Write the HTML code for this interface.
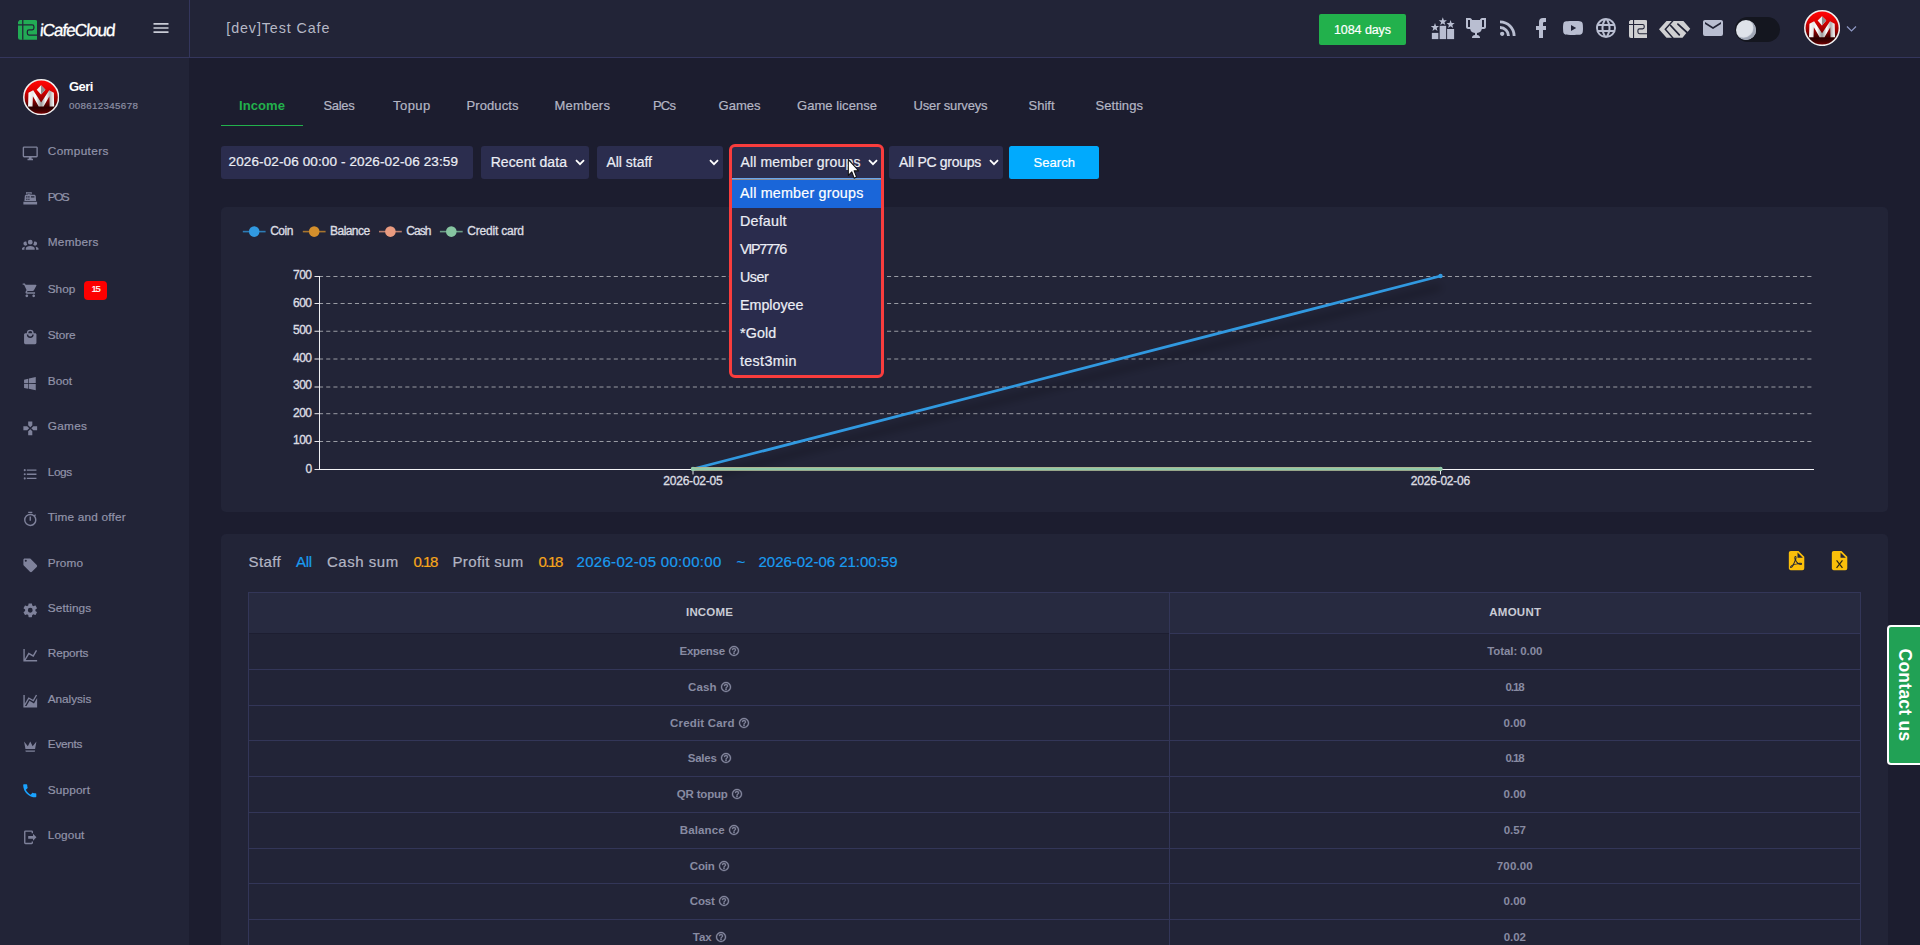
<!DOCTYPE html>
<html lang="en">
<head>
<meta charset="utf-8">
<title>iCafeCloud - Income report</title>
<style>
*{box-sizing:border-box;margin:0;padding:0}
html,body{width:1920px;height:945px;overflow:hidden}
body{background:#1c1d2f;font-family:"Liberation Sans",sans-serif;color:#d2d4de;font-size:13px;position:relative}
.abs{position:absolute}
.tx{position:absolute;white-space:nowrap}
.box{position:absolute}
#header{position:absolute;left:0;top:0;width:1920px;height:58px;background:#222437;border-bottom:1px solid #34365c}
#logo-wrap{position:absolute;left:0;top:0;width:190px;height:58px;border-right:1px solid #34365c}
#sidebar{position:absolute;left:0;top:58px;width:189px;height:887px;background:#222437}
.fld{position:absolute;top:146px;height:33px;background:#2b2d4e;border-radius:3px}
.card{position:absolute;background:#222437;border-radius:5px}
.hl{position:absolute;height:1px;background:#333658}
.vl{position:absolute;width:1px;background:#333658}
</style>
</head>
<body>

<header>
<div id="header"><div id="logo-wrap"></div></div>
<svg class="abs" style="left:17.9px;top:20.1px" width="19.4" height="19.7" viewBox="0 0 19.4 19.7">
<path d="M1.68,0.00H17.09Q19.40,0.00 19.40,2.42V19.7H2.10Q0.00,19.70 0.00,17.50V1.76Z" fill="#22ab55"/>
<g fill="none" stroke="#222437" stroke-width="1.25">
<path d="M4.77,0.00V19.7"/>
<path d="M0.00,4.95H14.26Q15.94,4.95 15.94,6.71V8.03Q15.94,9.79 14.26,9.79H11.01Q9.33,9.79 9.33,11.56V13.32Q9.33,15.08 11.01,15.08H19.4"/>
</g></svg>
<span id="t1" class="tx " style="left:38.60px;top:19.00px;font-size:17.2px;line-height:22px;color:#ffffff;letter-spacing:-1.048px;transform:skewX(-5deg);transform-origin:0 100%;-webkit-text-stroke:0.3px #fff;">iCafeCloud</span>
<svg class="abs" style="left:151.3px;top:17.6px" width="20" height="20" viewBox="0 0 24 24" ><path fill="#c9cbd6" d="M3,6H21V8H3V6M3,11H21V13H3V11M3,16H21V18H3V16Z"/></svg>
<span id="t2" class="tx " style="left:226.30px;top:17.50px;font-size:14.3px;line-height:21px;color:#b6b8c6;letter-spacing:0.897px;-webkit-text-stroke:0;">[dev]Test Cafe</span>
<div class="box" style="left:1319px;top:14px;width:87px;height:31px;background:#22b14c;border-radius:2px"></div>
<span id="t3" class="tx " style="left:1334.00px;top:20.80px;font-size:12.5px;line-height:19px;color:#ffffff;letter-spacing:-0.081px;-webkit-text-stroke:0.2px;">1084 days</span>
<svg class="abs" style="left:1431px;top:17px" width="24" height="23" viewBox="0 0 24 23">
<g fill="#b9bed1">
<rect x="0.85" y="15.9" width="6.5" height="6.2"/><rect x="8.65" y="8.8" width="6.5" height="13.3"/><rect x="16.1" y="12" width="7" height="10.1"/>
<path d="M4.00,6.10L5.06,8.94L8.09,9.07L5.71,10.96L6.53,13.88L4.00,12.20L1.47,13.88L2.29,10.96L-0.09,9.07L2.94,8.94Z"/><path d="M11.80,0.30L12.86,3.14L15.89,3.27L13.51,5.16L14.33,8.08L11.80,6.40L9.27,8.08L10.09,5.16L7.71,3.27L10.74,3.14Z"/><path d="M19.60,3.10L20.66,5.94L23.69,6.07L21.31,7.96L22.13,10.88L19.60,9.20L17.07,10.88L17.89,7.96L15.51,6.07L18.54,5.94Z"/>
</g></svg>
<svg class="abs" style="left:1463.5px;top:16.1px" width="24" height="24" viewBox="0 0 24 24" ><path fill="#b9bed1" d="M20.2,2H19.5H18C17.1,2 16,3 16,4H8C8,3 6.9,2 6,2H4.5H3.8H2V11C2,12 3,13 4,13H6.2C6.6,15 7.9,16.7 11,17V19.1C8.8,19.3 8,20.4 8,21.7V22H16V21.7C16,20.4 15.2,19.3 13,19.1V17C16.1,16.7 17.4,15 17.8,13H20C21,13 22,12 22,11V2H20.2M4,11V4H6V6V11C5.1,11 4.3,11 4,11M20,11C19.7,11 18.9,11 18,11V6V4H20V11Z"/></svg>
<svg class="abs" style="left:1496px;top:16.1px" width="24" height="24" viewBox="0 0 24 24" ><path fill="#b9bed1" d="M6.18,15.64A2.18,2.18 0 0,1 8.36,17.82C8.36,19 7.38,20 6.18,20C5,20 4,19 4,17.82A2.18,2.18 0 0,1 6.18,15.64M4,4.44A15.56,15.56 0 0,1 19.56,20H16.73A12.73,12.73 0 0,0 4,7.27V4.44M4,10.1A9.9,9.9 0 0,1 13.9,20H11.07A7.07,7.07 0 0,0 4,12.93V10.1Z"/></svg>
<svg class="abs" style="left:1528.5px;top:16.1px" width="24" height="24" viewBox="0 0 24 24" ><path fill="#b9bed1" d="M17,2V2H17V6H15C14.31,6 14,6.81 14,7.5V10H14L17,10V14H14V22H10V14H7V10H10V6A4,4 0 0,1 14,2H17Z"/></svg>
<svg class="abs" style="left:1561px;top:16.1px" width="24" height="24" viewBox="0 0 24 24" ><path fill="#b9bed1" d="M10,15L15.19,12L10,9V15M21.56,7.17C21.69,7.64 21.78,8.27 21.84,9.07C21.91,9.87 21.94,10.56 21.94,11.16L22,12C22,14.19 21.84,15.8 21.56,16.83C21.31,17.73 20.73,18.31 19.83,18.56C19.36,18.69 18.5,18.78 17.18,18.84C15.88,18.91 14.69,18.94 13.59,18.94L12,19C7.81,19 5.2,18.84 4.17,18.56C3.27,18.31 2.69,17.73 2.44,16.83C2.31,16.36 2.22,15.73 2.16,14.93C2.09,14.13 2.06,13.44 2.06,12.84L2,12C2,9.81 2.16,8.2 2.44,7.17C2.69,6.27 3.27,5.69 4.17,5.44C4.64,5.31 5.5,5.22 6.82,5.16C8.12,5.09 9.31,5.06 10.41,5.06L12,5C16.19,5 18.8,5.16 19.83,5.44C20.73,5.69 21.31,6.27 21.56,7.17Z"/></svg>
<svg class="abs" style="left:1594px;top:16.1px" width="24" height="24" viewBox="0 0 24 24" ><path fill="#b9bed1" d="M16.36,14C16.44,13.34 16.5,12.68 16.5,12C16.5,11.32 16.44,10.66 16.36,10H19.74C19.9,10.64 20,11.31 20,12C20,12.69 19.9,13.36 19.74,14M14.59,19.56C15.19,18.45 15.65,17.25 15.97,16H18.92C17.96,17.65 16.43,18.93 14.59,19.56M14.34,14H9.66C9.56,13.34 9.5,12.68 9.5,12C9.5,11.32 9.56,10.65 9.66,10H14.34C14.43,10.65 14.5,11.32 14.5,12C14.5,12.68 14.43,13.34 14.34,14M12,19.96C11.17,18.76 10.5,17.43 10.09,16H13.91C13.5,17.43 12.83,18.76 12,19.96M8,8H5.08C6.03,6.34 7.57,5.06 9.4,4.44C8.8,5.55 8.35,6.75 8,8M5.08,16H8C8.35,17.25 8.8,18.45 9.4,19.56C7.57,18.93 6.03,17.65 5.08,16M4.26,14C4.1,13.36 4,12.69 4,12C4,11.31 4.1,10.64 4.26,10H7.64C7.56,10.66 7.5,11.32 7.5,12C7.5,12.68 7.56,13.34 7.64,14M12,4.03C12.83,5.23 13.5,6.57 13.91,8H10.09C10.5,6.57 11.17,5.23 12,4.03M18.92,8H15.97C15.65,6.75 15.19,5.55 14.59,4.44C16.43,5.07 17.96,6.34 18.92,8M12,2C6.47,2 2,6.5 2,12A10,10 0 0,0 12,22A10,10 0 0,0 22,12A10,10 0 0,0 12,2Z"/></svg>
<svg class="abs" style="left:1628.7px;top:19.7px" width="18.5" height="17.9" viewBox="0 0 18.5 17.9">
<path d="M1.60,0.00H16.30Q18.50,0.00 18.50,2.20V17.9H2.00Q0.00,17.90 0.00,15.90V1.60Z" fill="#d0d0d2"/>
<g fill="none" stroke="#222437" stroke-width="1.1">
<path d="M4.55,0.00V17.9"/>
<path d="M0.00,4.50H13.60Q15.20,4.50 15.20,6.10V7.30Q15.20,8.90 13.60,8.90H10.50Q8.90,8.90 8.90,10.50V12.10Q8.90,13.70 10.50,13.70H18.5"/>
</g></svg>
<svg class="abs" style="left:1659.3px;top:21px" width="32" height="17" viewBox="0 0 32 17">
<path d="M0,8.33L7.5,0H24.4L31.25,7.7L28.1,11.4L27,12.6L23.5,16.8H7.5Z" fill="#d0d0d2"/>
<g fill="none" stroke="#222437" stroke-width="1.7">
<path d="M14.1,-0.4L6.3,8.33L14.1,17.2" stroke-width="1.45"/>
<path d="M11.6,4.5L20.3,13.9" stroke-linecap="round"/>
<path d="M18.9,3.1L28.6,12" stroke-linecap="round"/>
</g></svg>
<svg class="abs" style="left:1700.5px;top:16.1px" width="24" height="24" viewBox="0 0 24 24" ><path fill="#b9bed1" d="M20,8L12,13L4,8V6L12,11L20,6M20,4H4C2.89,4 2,4.89 2,6V18A2,2 0 0,0 4,20H20A2,2 0 0,0 22,18V6C22,4.89 21.1,4 20,4Z"/></svg>
<div class="box" style="left:1735px;top:17px;width:45px;height:25px;border-radius:13px;background:#14161f"></div>
<div class="box" style="left:1736px;top:20px;width:20px;height:20px;border-radius:10px;background:#dfe3ea;box-shadow:inset -2.6px -2.2px 0.8px 0 #a0a7b6"></div>
<svg class="abs" style="left:1803.9px;top:9.899999999999999px" width="36.2" height="36.2" viewBox="0 0 40 40">
<defs><linearGradient id="aga" x1="0" y1="0" x2="0" y2="1"><stop offset="0.05" stop-color="#ff0505"/><stop offset="0.3" stop-color="#e00000"/><stop offset="0.6" stop-color="#8c0000"/><stop offset="0.8" stop-color="#2c0000"/><stop offset="0.9" stop-color="#4a0000"/><stop offset="1" stop-color="#8a0000"/></linearGradient>
<linearGradient id="ama" x1="0" y1="0" x2="1" y2="0"><stop offset="0" stop-color="#ffffff"/><stop offset="0.16" stop-color="#e8e8e8"/><stop offset="0.3" stop-color="#ffffff"/><stop offset="0.5" stop-color="#9a9a9a"/><stop offset="0.68" stop-color="#ffffff"/><stop offset="0.84" stop-color="#b0b0b0"/><stop offset="1" stop-color="#ffffff"/></linearGradient></defs>
<circle cx="20" cy="20" r="19.1" fill="url(#aga)" stroke="#f0f0f0" stroke-width="1.7"/>
<path d="M5.6,30.1L6,15.1L11.2,12.4L19.95,25.7L28.8,12.4L33.9,15.1L34.25,30.1H29.3L29.05,19L22.6,30.1H17.3L10.9,19L10.45,30.1Z" fill="url(#ama)"/>
<path d="M19.8,7L24.6,11.7L19.8,17L15.1,11.7Z" fill="#f4f4f4"/><path d="M19.8,7L24.6,11.7L19.8,17Z" fill="#8e8e8e"/>
</svg>
<svg class="abs" style="left:1846px;top:24.5px" width="11" height="8" viewBox="0 0 11 8"><path d="M1,1.5L5.5,6L10,1.5" fill="none" stroke="#8e98c4" stroke-width="1.2"/></svg>
</header>
<nav>
<div id="sidebar"></div>
<svg class="abs" style="left:22.849999999999998px;top:78.7px" width="36.4" height="36.4" viewBox="0 0 40 40">
<defs><linearGradient id="agb" x1="0" y1="0" x2="0" y2="1"><stop offset="0.05" stop-color="#ff0505"/><stop offset="0.3" stop-color="#e00000"/><stop offset="0.6" stop-color="#8c0000"/><stop offset="0.8" stop-color="#2c0000"/><stop offset="0.9" stop-color="#4a0000"/><stop offset="1" stop-color="#8a0000"/></linearGradient>
<linearGradient id="amb" x1="0" y1="0" x2="1" y2="0"><stop offset="0" stop-color="#ffffff"/><stop offset="0.16" stop-color="#e8e8e8"/><stop offset="0.3" stop-color="#ffffff"/><stop offset="0.5" stop-color="#9a9a9a"/><stop offset="0.68" stop-color="#ffffff"/><stop offset="0.84" stop-color="#b0b0b0"/><stop offset="1" stop-color="#ffffff"/></linearGradient></defs>
<circle cx="20" cy="20" r="19.1" fill="url(#agb)" stroke="#f0f0f0" stroke-width="1.7"/>
<path d="M5.6,30.1L6,15.1L11.2,12.4L19.95,25.7L28.8,12.4L33.9,15.1L34.25,30.1H29.3L29.05,19L22.6,30.1H17.3L10.9,19L10.45,30.1Z" fill="url(#amb)"/>
<path d="M19.8,7L24.6,11.7L19.8,17L15.1,11.7Z" fill="#f4f4f4"/><path d="M19.8,7L24.6,11.7L19.8,17Z" fill="#8e8e8e"/>
</svg>
<span id="t4" class="tx " style="left:69.00px;top:77.00px;font-size:13px;line-height:20px;color:#ffffff;font-weight:700;letter-spacing:-0.576px;">Geri</span>
<span id="t5" class="tx " style="left:69.00px;top:98.00px;font-size:9.8px;line-height:15px;color:#8d8fa4;letter-spacing:0.314px;-webkit-text-stroke:0.2px;">008612345678</span>
<svg class="abs" style="left:22.2px;top:144.6px" width="16.5" height="16.5" viewBox="0 0 24 24" ><path fill="#7f829b" d="M21,16H3V4H21M21,2H3C1.89,2 1,2.89 1,4V16A2,2 0 0,0 3,18H10V20H8V22H16V20H14V18H21A2,2 0 0,0 23,16V4C23,2.89 22.1,2 21,2Z"/></svg>
<span id="t6" class="tx " style="left:47.80px;top:142.30px;font-size:11.8px;line-height:18px;color:#9294aa;letter-spacing:0.353px;-webkit-text-stroke:0.2px;">Computers</span>
<svg class="abs" style="left:22.2px;top:190.4px" width="16.5" height="16.5" viewBox="0 0 24 24" ><path fill="#7f829b" d="M2,17H22V21H2V17M6.25,7H9V6H6V3H14V6H11V7H17.8C18.8,7 19.8,8 20,9L20.5,16H3.5L4.05,9C4.05,8 5.05,7 6.25,7M13,9V11H18V9H13M6,9V10H8V9H6M9,9V10H11V9H9M6,11V12H8V11H6M9,11V12H11V11H9M6,13V14H8V13H6M9,13V14H11V13H9M7,4V5H13V4H7Z"/></svg>
<span id="t7" class="tx " style="left:47.80px;top:188.10px;font-size:11.8px;line-height:18px;color:#9294aa;letter-spacing:-1.500px;-webkit-text-stroke:0.2px;">POS</span>
<svg class="abs" style="left:22.2px;top:235.79999999999998px" width="16.5" height="16.5" viewBox="0 0 24 24" ><path fill="#7f829b" d="M12,5.5A3.5,3.5 0 0,1 15.5,9A3.5,3.5 0 0,1 12,12.5A3.5,3.5 0 0,1 8.5,9A3.5,3.5 0 0,1 12,5.5M5,8C5.56,8 6.08,8.15 6.53,8.42C6.38,9.85 6.8,11.27 7.66,12.38C7.16,13.34 6.16,14 5,14A3,3 0 0,1 2,11A3,3 0 0,1 5,8M19,8A3,3 0 0,1 22,11A3,3 0 0,1 19,14C17.84,14 16.84,13.34 16.34,12.38C17.2,11.27 17.62,9.85 17.47,8.42C17.92,8.15 18.44,8 19,8M5.5,18.25C5.5,16.18 8.41,14.5 12,14.5C15.59,14.5 18.5,16.18 18.5,18.25V20H5.5V18.25M0,20V18.5C0,17.11 1.89,15.94 4.45,15.6C3.86,16.28 3.5,17.22 3.5,18.25V20H0M24,20H20.5V18.25C20.5,17.22 20.14,16.28 19.55,15.6C22.11,15.94 24,17.11 24,18.5V20Z"/></svg>
<span id="t8" class="tx " style="left:47.80px;top:232.80px;font-size:11.8px;line-height:18px;color:#9294aa;letter-spacing:0.235px;-webkit-text-stroke:0.2px;">Members</span>
<svg class="abs" style="left:22.2px;top:282.40000000000003px" width="16.5" height="16.5" viewBox="0 0 24 24" ><path fill="#7f829b" d="M17,18C15.89,18 15,18.89 15,20A2,2 0 0,0 17,22A2,2 0 0,0 19,20C19,18.89 18.1,18 17,18M1,2V4H3L6.6,11.59L5.24,14.04C5.09,14.32 5,14.65 5,15A2,2 0 0,0 7,17H19V15H7.42A0.25,0.25 0 0,1 7.17,14.75C7.17,14.7 7.18,14.66 7.2,14.63L8.1,13H15.55C16.3,13 16.96,12.58 17.3,11.97L20.88,5.5C20.95,5.34 21,5.17 21,5A1,1 0 0,0 20,4H5.21L4.27,2M7,18C5.89,18 5,18.89 5,20A2,2 0 0,0 7,22A2,2 0 0,0 9,20C9,18.89 8.1,18 7,18Z"/></svg>
<span id="t9" class="tx " style="left:47.80px;top:280.10px;font-size:11.8px;line-height:18px;color:#9294aa;letter-spacing:-0.046px;-webkit-text-stroke:0.2px;">Shop</span>
<svg class="abs" style="left:22.2px;top:328.6px" width="16.5" height="16.5" viewBox="0 0 24 24" ><path fill="#7f829b" d="M12,13A5,5 0 0,1 7,8H9A3,3 0 0,0 12,11A3,3 0 0,0 15,8H17A5,5 0 0,1 12,13M12,3A3,3 0 0,1 15,6H9A3,3 0 0,1 12,3M19,6H17A5,5 0 0,0 12,1A5,5 0 0,0 7,6H5C3.89,6 3,6.89 3,8V20A2,2 0 0,0 5,22H19A2,2 0 0,0 21,20V8C21,6.89 20.1,6 19,6Z"/></svg>
<span id="t10" class="tx " style="left:47.80px;top:326.30px;font-size:11.8px;line-height:18px;color:#9294aa;letter-spacing:-0.090px;-webkit-text-stroke:0.2px;">Store</span>
<svg class="abs" style="left:22.2px;top:374.6px" width="16.5" height="16.5" viewBox="0 0 24 24" ><path fill="#7f829b" d="M3,12V6.75L9,5.43V11.91L3,12M20,3V11.75L10,11.9V5.21L20,3M3,13L9,13.09V19.9L3,18.75V13M20,13.25V22L10,20.09V13.1L20,13.25Z"/></svg>
<span id="t11" class="tx " style="left:47.80px;top:372.30px;font-size:11.8px;line-height:18px;color:#9294aa;letter-spacing:-0.023px;-webkit-text-stroke:0.2px;">Boot</span>
<svg class="abs" style="left:22.2px;top:419.6px" width="16.5" height="16.5" viewBox="0 0 24 24" ><path fill="#7f829b" d="M16.5,9L13.5,12L16.5,15H22V9M9,16.5V22H15V16.5L12,13.5M7.5,9H2V15H7.5L10.5,12M15,7.5V2H9V7.5L12,10.5L15,7.5Z"/></svg>
<span id="t12" class="tx " style="left:47.80px;top:417.30px;font-size:11.8px;line-height:18px;color:#9294aa;letter-spacing:0.260px;-webkit-text-stroke:0.2px;">Games</span>
<svg class="abs" style="left:22.2px;top:465.8px" width="16.5" height="16.5" viewBox="0 0 24 24" ><path fill="#7f829b" d="M7,5H21V7H7V5M7,13V11H21V13H7M4,4.5A1.5,1.5 0 0,1 5.5,6A1.5,1.5 0 0,1 4,7.5A1.5,1.5 0 0,1 2.5,6A1.5,1.5 0 0,1 4,4.5M4,10.5A1.5,1.5 0 0,1 5.5,12A1.5,1.5 0 0,1 4,13.5A1.5,1.5 0 0,1 2.5,12A1.5,1.5 0 0,1 4,10.5M7,19V17H21V19H7M4,16.5A1.5,1.5 0 0,1 5.5,18A1.5,1.5 0 0,1 4,19.5A1.5,1.5 0 0,1 2.5,18A1.5,1.5 0 0,1 4,16.5Z"/></svg>
<span id="t13" class="tx " style="left:47.80px;top:462.90px;font-size:11.8px;line-height:18px;color:#9294aa;letter-spacing:-0.398px;-webkit-text-stroke:0.2px;">Logs</span>
<svg class="abs" style="left:22.2px;top:510.9px" width="16.5" height="16.5" viewBox="0 0 24 24" ><path fill="#7f829b" d="M12,20A7,7 0 0,1 5,13A7,7 0 0,1 12,6A7,7 0 0,1 19,13A7,7 0 0,1 12,20M19.03,7.39L20.45,5.97C20,5.46 19.55,5 19.04,4.56L17.62,6C16.07,4.74 14.12,4 12,4A9,9 0 0,0 3,13A9,9 0 0,0 12,22C17,22 21,17.97 21,13C21,10.88 20.26,8.93 19.03,7.39M11,14H13V8H11M15,1H9V3H15V1Z"/></svg>
<span id="t14" class="tx " style="left:47.80px;top:507.80px;font-size:11.8px;line-height:18px;color:#9294aa;letter-spacing:0.191px;-webkit-text-stroke:0.2px;">Time and offer</span>
<svg class="abs" style="left:22.2px;top:556.8000000000001px" width="16.5" height="16.5" viewBox="0 0 24 24" ><path fill="#7f829b" d="M5.5,7A1.5,1.5 0 0,1 4,5.5A1.5,1.5 0 0,1 5.5,4A1.5,1.5 0 0,1 7,5.5A1.5,1.5 0 0,1 5.5,7M21.41,11.58L12.41,2.58C12.05,2.22 11.55,2 11,2H4C2.89,2 2,2.89 2,4V11C2,11.55 2.22,12.05 2.59,12.41L11.58,21.41C11.95,21.77 12.45,22 13,22C13.55,22 14.05,21.77 14.41,21.41L21.41,14.41C21.78,14.05 22,13.55 22,13C22,12.44 21.77,11.94 21.41,11.58Z"/></svg>
<span id="t15" class="tx " style="left:47.80px;top:553.60px;font-size:11.8px;line-height:18px;color:#9294aa;letter-spacing:0.100px;-webkit-text-stroke:0.2px;">Promo</span>
<svg class="abs" style="left:22.2px;top:601.8000000000001px" width="16.5" height="16.5" viewBox="0 0 24 24" ><path fill="#7f829b" d="M12,15.5A3.5,3.5 0 0,1 8.5,12A3.5,3.5 0 0,1 12,8.5A3.5,3.5 0 0,1 15.5,12A3.5,3.5 0 0,1 12,15.5M19.43,12.97C19.47,12.65 19.5,12.33 19.5,12C19.5,11.67 19.47,11.34 19.43,11L21.54,9.37C21.73,9.22 21.78,8.95 21.66,8.73L19.66,5.27C19.54,5.05 19.27,4.96 19.05,5.05L16.56,6.05C16.04,5.66 15.5,5.32 14.87,5.07L14.5,2.42C14.46,2.18 14.25,2 14,2H10C9.75,2 9.54,2.18 9.5,2.42L9.13,5.07C8.5,5.32 7.96,5.66 7.44,6.05L4.95,5.05C4.73,4.96 4.46,5.05 4.34,5.27L2.34,8.73C2.21,8.95 2.27,9.22 2.46,9.37L4.57,11C4.53,11.34 4.5,11.67 4.5,12C4.5,12.33 4.53,12.65 4.57,12.97L2.46,14.63C2.27,14.78 2.21,15.05 2.34,15.27L4.34,18.73C4.46,18.95 4.73,19.03 4.95,18.95L7.44,17.94C7.96,18.34 8.5,18.68 9.13,18.93L9.5,21.58C9.54,21.82 9.75,22 10,22H14C14.25,22 14.46,21.82 14.5,21.58L14.87,18.93C15.5,18.67 16.04,18.34 16.56,17.94L19.05,18.95C19.27,19.03 19.54,18.95 19.66,18.73L21.66,15.27C21.78,15.05 21.73,14.78 21.54,14.63L19.43,12.97Z"/></svg>
<span id="t16" class="tx " style="left:47.80px;top:598.60px;font-size:11.8px;line-height:18px;color:#9294aa;letter-spacing:0.101px;-webkit-text-stroke:0.2px;">Settings</span>
<svg class="abs" style="left:22.2px;top:646.8000000000001px" width="16.5" height="16.5" viewBox="0 0 24 24" ><path fill="#7f829b" d="M16,11.78L20.24,4.45L21.97,5.45L16.74,14.5L10.23,10.75L5.46,19H22V21H2V3H4V17.54L9.5,8L16,11.78Z"/></svg>
<span id="t17" class="tx " style="left:47.80px;top:643.60px;font-size:11.8px;line-height:18px;color:#9294aa;letter-spacing:-0.110px;-webkit-text-stroke:0.2px;">Reports</span>
<svg class="abs" style="left:22.2px;top:692.6px" width="16.5" height="16.5" viewBox="0 0 24 24" ><path fill="#7f829b" d="M17.45,15.18L22,7.31V19L22,21H2V3H4V15.54L9.5,6L16,9.78L20.24,2.45L21.97,3.45L16.74,12.5L10.23,8.75L4.31,19H6.57L10.96,11.44L17.45,15.18Z"/></svg>
<span id="t18" class="tx " style="left:47.80px;top:690.30px;font-size:11.8px;line-height:18px;color:#9294aa;letter-spacing:-0.058px;-webkit-text-stroke:0.2px;">Analysis</span>
<svg class="abs" style="left:22.2px;top:737.6px" width="16.5" height="16.5" viewBox="0 0 24 24" ><path fill="#7f829b" d="M5,16L3,5L8.5,12L12,5L15.5,12L21,5L19,16H5M19,19A1,1 0 0,1 18,20H6A1,1 0 0,1 5,19V18H19V19Z"/></svg>
<span id="t19" class="tx " style="left:47.80px;top:735.30px;font-size:11.8px;line-height:18px;color:#9294aa;letter-spacing:-0.269px;-webkit-text-stroke:0.2px;">Events</span>
<svg class="abs" style="left:21.4px;top:782.4px" width="17.5" height="17.5" viewBox="0 0 24 24" ><path fill="#1aa3ff" d="M6.62,10.79C8.06,13.62 10.38,15.94 13.21,17.38L15.41,15.18C15.69,14.9 16.08,14.82 16.43,14.93C17.55,15.3 18.75,15.5 20,15.5A1,1 0 0,1 21,16.5V20A1,1 0 0,1 20,21A17,17 0 0,1 3,4A1,1 0 0,1 4,3H7.5A1,1 0 0,1 8.5,4C8.5,5.25 8.7,6.45 9.07,7.57C9.18,7.92 9.1,8.31 8.82,8.59L6.62,10.79Z"/></svg>
<span id="t20" class="tx " style="left:47.80px;top:781.30px;font-size:11.8px;line-height:18px;color:#9294aa;letter-spacing:0.134px;-webkit-text-stroke:0.2px;">Support</span>
<svg class="abs" style="left:22.2px;top:828.6px" width="16.5" height="16.5" viewBox="0 0 24 24" ><path fill="#7f829b" d="M16,17V14H9V10H16V7L21,12L16,17M14,2A2,2 0 0,1 16,4V6H14V4H5V20H14V18H16V20A2,2 0 0,1 14,22H5A2,2 0 0,1 3,20V4A2,2 0 0,1 5,2H14Z"/></svg>
<span id="t21" class="tx " style="left:47.80px;top:826.30px;font-size:11.8px;line-height:18px;color:#9294aa;letter-spacing:0.092px;-webkit-text-stroke:0.2px;">Logout</span>
<div class="box" style="left:84px;top:281px;width:23px;height:19px;border-radius:4px;background:#fd0000"></div>
<span id="t22" class="tx " style="left:91.60px;top:282.20px;font-size:9.5px;line-height:14px;color:#ffffff;letter-spacing:-1.500px;-webkit-text-stroke:0.2px;">15</span>
</nav>
<main>
<section>
<span id="t23" class="tx " style="left:239.00px;top:95.50px;font-size:13px;line-height:20px;color:#22b14c;font-weight:700;letter-spacing:0.088px;">Income</span>
<span id="t24" class="tx " style="left:323.50px;top:95.50px;font-size:13px;line-height:20px;color:#b4b6c4;letter-spacing:-0.340px;-webkit-text-stroke:0.2px;">Sales</span>
<span id="t25" class="tx " style="left:393.00px;top:95.50px;font-size:13px;line-height:20px;color:#b4b6c4;letter-spacing:0.462px;-webkit-text-stroke:0.2px;">Topup</span>
<span id="t26" class="tx " style="left:466.50px;top:95.50px;font-size:13px;line-height:20px;color:#b4b6c4;letter-spacing:0.092px;-webkit-text-stroke:0.2px;">Products</span>
<span id="t27" class="tx " style="left:554.50px;top:95.50px;font-size:13px;line-height:20px;color:#b4b6c4;letter-spacing:0.202px;-webkit-text-stroke:0.2px;">Members</span>
<span id="t28" class="tx " style="left:653.00px;top:95.50px;font-size:13px;line-height:20px;color:#b4b6c4;letter-spacing:-0.825px;-webkit-text-stroke:0.2px;">PCs</span>
<span id="t29" class="tx " style="left:718.50px;top:95.50px;font-size:13px;line-height:20px;color:#b4b6c4;letter-spacing:0.021px;-webkit-text-stroke:0.2px;">Games</span>
<span id="t30" class="tx " style="left:797.00px;top:95.50px;font-size:13px;line-height:20px;color:#b4b6c4;letter-spacing:0.045px;-webkit-text-stroke:0.2px;">Game license</span>
<span id="t31" class="tx " style="left:913.50px;top:95.50px;font-size:13px;line-height:20px;color:#b4b6c4;letter-spacing:-0.162px;-webkit-text-stroke:0.2px;">User surveys</span>
<span id="t32" class="tx " style="left:1028.50px;top:95.50px;font-size:13px;line-height:20px;color:#b4b6c4;letter-spacing:-0.003px;-webkit-text-stroke:0.2px;">Shift</span>
<span id="t33" class="tx " style="left:1095.50px;top:95.50px;font-size:13px;line-height:20px;color:#b4b6c4;letter-spacing:0.069px;-webkit-text-stroke:0.2px;">Settings</span>
<div class="box" style="left:221px;top:124.9px;width:82px;height:1.3px;background:#22b14c"></div>
</section>
<section>
<div class="fld" style="left:221px;width:252px"></div>
<div class="fld" style="left:481px;width:108px"></div>
<div class="fld" style="left:597px;width:126px"></div>
<div class="fld" style="left:732px;width:149px"></div>
<div class="fld" style="left:889px;width:114px"></div>
<span id="t34" class="tx " style="left:228.50px;top:151.50px;font-size:13.5px;line-height:20px;color:#eceef5;letter-spacing:0.125px;-webkit-text-stroke:0.2px;">2026-02-06 00:00 - 2026-02-06 23:59</span>
<span id="t35" class="tx " style="left:490.70px;top:152.00px;font-size:14px;line-height:21px;color:#eceef5;letter-spacing:0.076px;-webkit-text-stroke:0.2px;">Recent data</span>
<svg class="abs" style="left:575px;top:159.0px" width="10" height="7" viewBox="0 0 10 7"><path d="M1,1.2L5,5.2L9,1.2" fill="none" stroke="#ffffff" stroke-width="1.8"/></svg>
<span id="t36" class="tx " style="left:606.40px;top:152.00px;font-size:14px;line-height:21px;color:#eceef5;letter-spacing:-0.007px;-webkit-text-stroke:0.2px;">All staff</span>
<svg class="abs" style="left:708.6px;top:159.0px" width="10" height="7" viewBox="0 0 10 7"><path d="M1,1.2L5,5.2L9,1.2" fill="none" stroke="#ffffff" stroke-width="1.8"/></svg>
<span id="t37" class="tx " style="left:740.50px;top:152.00px;font-size:14px;line-height:21px;color:#eceef5;letter-spacing:0.152px;-webkit-text-stroke:0.2px;">All member groups</span>
<svg class="abs" style="left:867.5px;top:159.0px" width="10" height="7" viewBox="0 0 10 7"><path d="M1,1.2L5,5.2L9,1.2" fill="none" stroke="#ffffff" stroke-width="1.8"/></svg>
<span id="t38" class="tx " style="left:899.10px;top:152.00px;font-size:14px;line-height:21px;color:#eceef5;letter-spacing:-0.287px;-webkit-text-stroke:0.2px;">All PC groups</span>
<svg class="abs" style="left:988.5px;top:159.0px" width="10" height="7" viewBox="0 0 10 7"><path d="M1,1.2L5,5.2L9,1.2" fill="none" stroke="#ffffff" stroke-width="1.8"/></svg>
<div class="box" style="left:1009px;top:146px;width:90px;height:33px;background:#01aafd;border-radius:2.5px"></div>
<span id="t39" class="tx " style="left:1033.50px;top:152.50px;font-size:13px;line-height:20px;color:#ffffff;letter-spacing:0.054px;-webkit-text-stroke:0.2px;">Search</span>
</section>
<section>
<div class="card" style="left:221px;top:207px;width:1667px;height:305px"></div>
<svg class="abs" style="left:221px;top:207px" width="1667" height="305" viewBox="221 207 1667 305"><defs><filter id="ls" x="-5%" y="-30%" width="110%" height="180%"><feGaussianBlur stdDeviation="4.5"/></filter></defs>
<line x1="319" x2="1814" y1="276.5" y2="276.5" stroke="#999ba3" stroke-width="1" stroke-dasharray="4.1 3.09"/>
<line x1="319" x2="1814" y1="303.5" y2="303.5" stroke="#999ba3" stroke-width="1" stroke-dasharray="4.1 3.09"/>
<line x1="319" x2="1814" y1="331.25" y2="331.25" stroke="#999ba3" stroke-width="1" stroke-dasharray="4.1 3.09"/>
<line x1="319" x2="1814" y1="359.0" y2="359.0" stroke="#999ba3" stroke-width="1" stroke-dasharray="4.1 3.09"/>
<line x1="319" x2="1814" y1="387.0" y2="387.0" stroke="#999ba3" stroke-width="1" stroke-dasharray="4.1 3.09"/>
<line x1="319" x2="1814" y1="413.7" y2="413.7" stroke="#999ba3" stroke-width="1" stroke-dasharray="4.1 3.09"/>
<line x1="319" x2="1814" y1="441.5" y2="441.5" stroke="#999ba3" stroke-width="1" stroke-dasharray="4.1 3.09"/>
<line x1="314.5" x2="320" y1="276.5" y2="276.5" stroke="#e8e8ec" stroke-width="1"/>
<line x1="314.5" x2="320" y1="303.5" y2="303.5" stroke="#e8e8ec" stroke-width="1"/>
<line x1="314.5" x2="320" y1="331.25" y2="331.25" stroke="#e8e8ec" stroke-width="1"/>
<line x1="314.5" x2="320" y1="359.0" y2="359.0" stroke="#e8e8ec" stroke-width="1"/>
<line x1="314.5" x2="320" y1="387.0" y2="387.0" stroke="#e8e8ec" stroke-width="1"/>
<line x1="314.5" x2="320" y1="413.7" y2="413.7" stroke="#e8e8ec" stroke-width="1"/>
<line x1="314.5" x2="320" y1="441.5" y2="441.5" stroke="#e8e8ec" stroke-width="1"/>
<line x1="314.5" x2="320" y1="469.5" y2="469.5" stroke="#e8e8ec" stroke-width="1"/>
<line x1="319.5" x2="319.5" y1="276" y2="470" stroke="#f0f0f3" stroke-width="1"/>
<line x1="319" x2="1814" y1="469.5" y2="469.5" stroke="#f4f4f6" stroke-width="1.2"/>
<line x1="693" x2="693" y1="470" y2="474.5" stroke="#e8e8ec" stroke-width="1"/><line x1="1440.5" x2="1440.5" y1="470" y2="474.5" stroke="#e8e8ec" stroke-width="1"/>
<path d="M693,480L1440.5,287" stroke="#0a0b12" stroke-opacity="0.42" stroke-width="3.5" fill="none" filter="url(#ls)"/>
<path d="M693,469L1440.5,276" stroke="#3199e0" stroke-width="2.8" fill="none" stroke-linecap="round"/>
<path d="M693,468.9H1440.5" stroke="#c9a27c" stroke-width="3.6" fill="none" stroke-linecap="round"/>
<path d="M693,468.9H1440.5" stroke="#90c9a8" stroke-width="3" fill="none" stroke-linecap="round"/>
<circle cx="1440.5" cy="276" r="2.2" fill="#3199e0"/><circle cx="693" cy="468.9" r="2.2" fill="#90c9a8"/><circle cx="1440.5" cy="468.9" r="2.2" fill="#90c9a8"/>
<line x1="242.79999999999998" x2="265.59999999999997" y1="231.6" y2="231.6" stroke="#3199e0" stroke-opacity="0.75" stroke-width="1.6"/><circle cx="254.2" cy="231.6" r="5.3" fill="#3199e0"/>
<line x1="302.8" x2="325.59999999999997" y1="231.6" y2="231.6" stroke="#d48f2c" stroke-opacity="0.75" stroke-width="1.6"/><circle cx="314.2" cy="231.6" r="5.3" fill="#d48f2c"/>
<line x1="379.0" x2="401.79999999999995" y1="231.6" y2="231.6" stroke="#ea9b80" stroke-opacity="0.75" stroke-width="1.6"/><circle cx="390.4" cy="231.6" r="5.3" fill="#ea9b80"/>
<line x1="439.90000000000003" x2="462.7" y1="231.6" y2="231.6" stroke="#86c5a1" stroke-opacity="0.75" stroke-width="1.6"/><circle cx="451.3" cy="231.6" r="5.3" fill="#86c5a1"/>
</svg>
<span id="t40" class="tx " style="left:270.20px;top:222.00px;font-size:12px;line-height:18px;color:#dcdde2;letter-spacing:-0.482px;font-weight:400;-webkit-text-stroke:0.35px #dcdde2;">Coin</span>
<span id="t41" class="tx " style="left:330.10px;top:222.00px;font-size:12px;line-height:18px;color:#dcdde2;letter-spacing:-0.565px;font-weight:400;-webkit-text-stroke:0.35px #dcdde2;">Balance</span>
<span id="t42" class="tx " style="left:406.30px;top:222.00px;font-size:12px;line-height:18px;color:#dcdde2;letter-spacing:-0.947px;font-weight:400;-webkit-text-stroke:0.35px #dcdde2;">Cash</span>
<span id="t43" class="tx " style="left:467.20px;top:222.00px;font-size:12px;line-height:18px;color:#dcdde2;letter-spacing:-0.189px;font-weight:400;-webkit-text-stroke:0.35px #dcdde2;">Credit card</span>
<span id="t44" class="tx " style="left:293.10px;top:265.90px;font-size:12px;line-height:18px;color:#dcdde2;letter-spacing:-0.572px;font-weight:400;-webkit-text-stroke:0.35px #dcdde2;">700</span>
<span id="t45" class="tx " style="left:293.10px;top:293.80px;font-size:12px;line-height:18px;color:#dcdde2;letter-spacing:-0.572px;font-weight:400;-webkit-text-stroke:0.35px #dcdde2;">600</span>
<span id="t46" class="tx " style="left:293.10px;top:321.35px;font-size:12px;line-height:18px;color:#dcdde2;letter-spacing:-0.572px;font-weight:400;-webkit-text-stroke:0.35px #dcdde2;">500</span>
<span id="t47" class="tx " style="left:293.10px;top:348.60px;font-size:12px;line-height:18px;color:#dcdde2;letter-spacing:-0.572px;font-weight:400;-webkit-text-stroke:0.35px #dcdde2;">400</span>
<span id="t48" class="tx " style="left:293.10px;top:376.20px;font-size:12px;line-height:18px;color:#dcdde2;letter-spacing:-0.572px;font-weight:400;-webkit-text-stroke:0.35px #dcdde2;">300</span>
<span id="t49" class="tx " style="left:293.10px;top:403.80px;font-size:12px;line-height:18px;color:#dcdde2;letter-spacing:-0.572px;font-weight:400;-webkit-text-stroke:0.35px #dcdde2;">200</span>
<span id="t50" class="tx " style="left:293.10px;top:431.30px;font-size:12px;line-height:18px;color:#dcdde2;letter-spacing:-0.572px;font-weight:400;-webkit-text-stroke:0.35px #dcdde2;">100</span>
<span id="t51" class="tx " style="left:305.40px;top:459.60px;font-size:12px;line-height:18px;color:#dcdde2;font-weight:400;-webkit-text-stroke:0.35px #dcdde2;">0</span>
<span id="t52" class="tx " style="left:663.30px;top:471.50px;font-size:12px;line-height:18px;color:#dcdde2;letter-spacing:-0.220px;font-weight:400;-webkit-text-stroke:0.35px #dcdde2;">2026-02-05</span>
<span id="t53" class="tx " style="left:1410.80px;top:471.50px;font-size:12px;line-height:18px;color:#dcdde2;letter-spacing:-0.220px;font-weight:400;-webkit-text-stroke:0.35px #dcdde2;">2026-02-06</span>
</section>
<section>
<div class="box" style="left:732px;top:180px;width:149px;height:195.5px;background:#2a2c4d"></div>
<div class="box" style="left:732px;top:180px;width:149px;height:27.8px;background:#1a66d9"></div>
<div class="box" style="left:732px;top:178px;width:149px;height:1px;background:#6aa6ec"></div>
<div class="box" style="left:732px;top:179px;width:149px;height:1px;background:#8b8c92"></div>
<span id="t54" class="tx " style="left:740.00px;top:183.00px;font-size:14.3px;line-height:21px;color:#ffffff;letter-spacing:0.207px;-webkit-text-stroke:0.2px;">All member groups</span>
<span id="t55" class="tx " style="left:740.00px;top:211.00px;font-size:14.3px;line-height:21px;color:#eceef5;letter-spacing:0.198px;-webkit-text-stroke:0.2px;">Default</span>
<span id="t56" class="tx " style="left:740.00px;top:239.00px;font-size:14.3px;line-height:21px;color:#eceef5;letter-spacing:-1.271px;-webkit-text-stroke:0.2px;">VIP7776</span>
<span id="t57" class="tx " style="left:740.00px;top:267.00px;font-size:14.3px;line-height:21px;color:#eceef5;letter-spacing:-0.454px;-webkit-text-stroke:0.2px;">User</span>
<span id="t58" class="tx " style="left:740.00px;top:295.00px;font-size:14.3px;line-height:21px;color:#eceef5;letter-spacing:-0.024px;-webkit-text-stroke:0.2px;">Employee</span>
<span id="t59" class="tx " style="left:740.00px;top:323.00px;font-size:14.3px;line-height:21px;color:#eceef5;letter-spacing:0.119px;-webkit-text-stroke:0.2px;">*Gold</span>
<span id="t60" class="tx " style="left:740.00px;top:351.00px;font-size:14.3px;line-height:21px;color:#eceef5;letter-spacing:0.340px;-webkit-text-stroke:0.2px;">test3min</span>
<div class="box" style="left:728.9px;top:144px;width:155px;height:234.2px;border:3.2px solid #f93d3d;border-radius:6px"></div>
<svg class="abs" style="left:846.6px;top:157.6px" width="12.6" height="22.4" viewBox="0 0 14 22" preserveAspectRatio="none"><path d="M1.5,1.5V17.2L5.3,13.6L8,19.8L10.6,18.7L7.9,12.6H13Z" fill="#ffffff" stroke="#111111" stroke-width="1.1" stroke-linejoin="round"/></svg>
</section>
<section>
<div class="card" style="left:221px;top:534px;width:1667px;height:430px"></div>
<span id="t61" class="tx " style="left:248.50px;top:551.00px;font-size:15px;line-height:22px;color:#b3b5c3;letter-spacing:0.424px;-webkit-text-stroke:0.2px;">Staff</span>
<span id="t62" class="tx " style="left:296.00px;top:551.00px;font-size:15px;line-height:22px;color:#1a9cf0;letter-spacing:-0.269px;-webkit-text-stroke:0.2px;">All</span>
<span id="t63" class="tx " style="left:327.00px;top:551.00px;font-size:15px;line-height:22px;color:#b3b5c3;letter-spacing:0.529px;-webkit-text-stroke:0.2px;">Cash sum</span>
<span id="t64" class="tx " style="left:413.50px;top:551.00px;font-size:15px;line-height:22px;color:#f7a71b;letter-spacing:-1.487px;-webkit-text-stroke:0.2px;">0.18</span>
<span id="t65" class="tx " style="left:452.50px;top:551.00px;font-size:15px;line-height:22px;color:#b3b5c3;letter-spacing:0.367px;-webkit-text-stroke:0.2px;">Profit sum</span>
<span id="t66" class="tx " style="left:538.50px;top:551.00px;font-size:15px;line-height:22px;color:#f7a71b;letter-spacing:-1.487px;-webkit-text-stroke:0.2px;">0.18</span>
<span id="t67" class="tx " style="left:576.50px;top:551.00px;font-size:15px;line-height:22px;color:#1a9cf0;letter-spacing:0.308px;-webkit-text-stroke:0.2px;">2026-02-05 00:00:00</span>
<span id="t68" class="tx " style="left:736.50px;top:551.00px;font-size:15px;line-height:22px;color:#1a9cf0;-webkit-text-stroke:0.2px;">~</span>
<span id="t69" class="tx " style="left:758.50px;top:551.00px;font-size:15px;line-height:22px;color:#1a9cf0;letter-spacing:-0.016px;-webkit-text-stroke:0.2px;">2026-02-06 21:00:59</span>
<svg class="abs" style="left:1783.8px;top:549.2px" width="23.2" height="23.2" viewBox="0 0 24 24" ><path fill="#fbbf0a" d="M14,9H19.5L14,3.5V9M7,2H15L21,8V20A2,2 0 0,1 19,22H7C5.89,22 5,21.1 5,20V4A2,2 0 0,1 7,2M11.93,12.44C12.34,13.34 12.86,14.08 13.46,14.59L13.87,14.91C13,15.07 11.8,15.35 10.53,15.84V15.84L10.42,15.88L10.92,14.84C11.37,13.97 11.7,13.18 11.93,12.44M18.41,16.25C18.59,16.07 18.68,15.84 18.69,15.59C18.72,15.39 18.67,15.2 18.57,15.04C18.28,14.57 17.53,14.35 16.29,14.35L15,14.42L14.13,13.84C13.5,13.32 12.93,12.41 12.53,11.28L12.57,11.14C12.9,9.81 13.21,8.2 12.55,7.54C12.39,7.38 12.17,7.3 11.94,7.3H11.7C11.33,7.3 11,7.69 10.91,8.07C10.54,9.4 10.76,10.13 11.13,11.34V11.35C10.88,12.23 10.56,13.25 10.05,14.28L9.09,16.08L8.2,16.57C7,17.32 6.43,18.16 6.32,18.69C6.28,18.88 6.3,19.05 6.37,19.23L6.4,19.28L6.88,19.59L7.32,19.7C8.13,19.7 9.05,18.75 10.29,16.63L10.47,16.56C11.5,16.23 12.78,16 14.5,15.81C15.53,16.32 16.74,16.55 17.5,16.55C17.94,16.55 18.24,16.44 18.41,16.25M18,15.54L18.09,15.65C18.08,15.75 18.05,15.76 18,15.78H17.96L17.77,15.8C17.31,15.8 16.6,15.61 15.87,15.29C15.96,15.19 16,15.19 16.1,15.19C17.5,15.19 17.9,15.44 18,15.54M8.83,17C8.18,18.19 7.59,18.85 7.14,19C7.19,18.62 7.64,17.96 8.35,17.31L8.83,17M11.85,10.09C11.62,9.19 11.61,8.46 11.78,8.04L11.85,7.92L12,7.97C12.17,8.21 12.19,8.53 12.09,9.07L12.06,9.23L11.9,10.05L11.85,10.09Z"/></svg>
<svg class="abs" style="left:1827.1px;top:549.2px" width="23.2" height="23.2" viewBox="0 0 24 24"><path fill="#fbbf0a" d="M7,2H15L21,8V20A2,2 0 0,1 19,22H7C5.89,22 5,21.1 5,20V4A2,2 0 0,1 7,2M14,3.5V9H19.5Z"/><path d="M9.9,11.8L16,19.6M16,11.8L9.9,19.6" stroke="#2e2712" stroke-width="1.25" fill="none"/></svg>
<div class="box" style="left:248px;top:592px;width:1613px;height:42px;background:#272a40"></div>
<div class="hl" style="left:248px;top:592px;width:1613px"></div>
<div class="hl" style="left:248px;top:633px;width:1613px"></div>
<div class="hl" style="left:248px;top:669px;width:1613px"></div>
<div class="hl" style="left:248px;top:705px;width:1613px"></div>
<div class="hl" style="left:248px;top:740px;width:1613px"></div>
<div class="hl" style="left:248px;top:776px;width:1613px"></div>
<div class="hl" style="left:248px;top:812px;width:1613px"></div>
<div class="hl" style="left:248px;top:848px;width:1613px"></div>
<div class="hl" style="left:248px;top:883px;width:1613px"></div>
<div class="hl" style="left:248px;top:919px;width:1613px"></div>
<div class="hl" style="left:249px;top:633px;width:920px;background:#1d1e31"></div>
<div class="vl" style="left:248px;top:592px;height:353px"></div>
<div class="vl" style="left:1169px;top:592px;height:353px"></div>
<div class="vl" style="left:1860px;top:592px;height:353px"></div>
<span id="t70" class="tx " style="left:686.00px;top:603.80px;font-size:11.5px;line-height:17px;color:#c9cbd5;font-weight:700;letter-spacing:0.182px;">INCOME</span>
<span id="t71" class="tx " style="left:1489.30px;top:603.80px;font-size:11.5px;line-height:17px;color:#c9cbd5;font-weight:700;letter-spacing:0.242px;">AMOUNT</span>
<span id="t72" class="tx " style="left:679.50px;top:642.50px;font-size:11.5px;line-height:17px;color:#888ba2;font-weight:700;letter-spacing:-0.279px;">Expense</span>
<svg class="abs" style="left:728.2px;top:644.8px" width="12" height="12" viewBox="0 0 24 24" stroke="#888ba2" stroke-width="0.7"><path fill="#888ba2" d="M11,18H13V16H11V18M12,2A10,10 0 0,0 2,12A10,10 0 0,0 12,22A10,10 0 0,0 22,12A10,10 0 0,0 12,2M12,20C7.59,20 4,16.41 4,12C4,7.59 7.59,4 12,4C16.41,4 20,7.59 20,12C20,16.41 16.41,20 12,20M12,6A4,4 0 0,0 8,10H10A2,2 0 0,1 12,8A2,2 0 0,1 14,10C14,12 11,11.75 11,15H13C13,12.75 16,12.5 16,10A4,4 0 0,0 12,6Z"/></svg>
<span id="t73" class="tx " style="left:1487.15px;top:642.50px;font-size:11.5px;line-height:17px;color:#888ba2;font-weight:700;letter-spacing:-0.070px;">Total: 0.00</span>
<span id="t74" class="tx " style="left:688.00px;top:678.50px;font-size:11.5px;line-height:17px;color:#888ba2;font-weight:700;letter-spacing:0.107px;">Cash</span>
<svg class="abs" style="left:719.7px;top:680.8px" width="12" height="12" viewBox="0 0 24 24" stroke="#888ba2" stroke-width="0.7"><path fill="#888ba2" d="M11,18H13V16H11V18M12,2A10,10 0 0,0 2,12A10,10 0 0,0 12,22A10,10 0 0,0 22,12A10,10 0 0,0 12,2M12,20C7.59,20 4,16.41 4,12C4,7.59 7.59,4 12,4C16.41,4 20,7.59 20,12C20,16.41 16.41,20 12,20M12,6A4,4 0 0,0 8,10H10A2,2 0 0,1 12,8A2,2 0 0,1 14,10C14,12 11,11.75 11,15H13C13,12.75 16,12.5 16,10A4,4 0 0,0 12,6Z"/></svg>
<span id="t75" class="tx " style="left:1505.55px;top:678.50px;font-size:11.5px;line-height:17px;color:#888ba2;font-weight:700;letter-spacing:-1.112px;">0.18</span>
<span id="t76" class="tx " style="left:670.00px;top:715.00px;font-size:11.5px;line-height:17px;color:#888ba2;font-weight:700;letter-spacing:0.179px;">Credit Card</span>
<svg class="abs" style="left:737.7px;top:717.3px" width="12" height="12" viewBox="0 0 24 24" stroke="#888ba2" stroke-width="0.7"><path fill="#888ba2" d="M11,18H13V16H11V18M12,2A10,10 0 0,0 2,12A10,10 0 0,0 12,22A10,10 0 0,0 22,12A10,10 0 0,0 12,2M12,20C7.59,20 4,16.41 4,12C4,7.59 7.59,4 12,4C16.41,4 20,7.59 20,12C20,16.41 16.41,20 12,20M12,6A4,4 0 0,0 8,10H10A2,2 0 0,1 12,8A2,2 0 0,1 14,10C14,12 11,11.75 11,15H13C13,12.75 16,12.5 16,10A4,4 0 0,0 12,6Z"/></svg>
<span id="t77" class="tx " style="left:1503.60px;top:715.00px;font-size:11.5px;line-height:17px;color:#888ba2;font-weight:700;letter-spacing:0.003px;">0.00</span>
<span id="t78" class="tx " style="left:687.75px;top:749.80px;font-size:11.5px;line-height:17px;color:#888ba2;font-weight:700;letter-spacing:-0.236px;">Sales</span>
<svg class="abs" style="left:719.95px;top:752.0999999999999px" width="12" height="12" viewBox="0 0 24 24" stroke="#888ba2" stroke-width="0.7"><path fill="#888ba2" d="M11,18H13V16H11V18M12,2A10,10 0 0,0 2,12A10,10 0 0,0 12,22A10,10 0 0,0 22,12A10,10 0 0,0 12,2M12,20C7.59,20 4,16.41 4,12C4,7.59 7.59,4 12,4C16.41,4 20,7.59 20,12C20,16.41 16.41,20 12,20M12,6A4,4 0 0,0 8,10H10A2,2 0 0,1 12,8A2,2 0 0,1 14,10C14,12 11,11.75 11,15H13C13,12.75 16,12.5 16,10A4,4 0 0,0 12,6Z"/></svg>
<span id="t79" class="tx " style="left:1505.55px;top:749.80px;font-size:11.5px;line-height:17px;color:#888ba2;font-weight:700;letter-spacing:-1.112px;">0.18</span>
<span id="t80" class="tx " style="left:676.75px;top:785.50px;font-size:11.5px;line-height:17px;color:#888ba2;font-weight:700;letter-spacing:-0.183px;">QR topup</span>
<svg class="abs" style="left:730.95px;top:787.8px" width="12" height="12" viewBox="0 0 24 24" stroke="#888ba2" stroke-width="0.7"><path fill="#888ba2" d="M11,18H13V16H11V18M12,2A10,10 0 0,0 2,12A10,10 0 0,0 12,22A10,10 0 0,0 22,12A10,10 0 0,0 12,2M12,20C7.59,20 4,16.41 4,12C4,7.59 7.59,4 12,4C16.41,4 20,7.59 20,12C20,16.41 16.41,20 12,20M12,6A4,4 0 0,0 8,10H10A2,2 0 0,1 12,8A2,2 0 0,1 14,10C14,12 11,11.75 11,15H13C13,12.75 16,12.5 16,10A4,4 0 0,0 12,6Z"/></svg>
<span id="t81" class="tx " style="left:1503.60px;top:785.50px;font-size:11.5px;line-height:17px;color:#888ba2;font-weight:700;letter-spacing:0.003px;">0.00</span>
<span id="t82" class="tx " style="left:679.75px;top:821.50px;font-size:11.5px;line-height:17px;color:#888ba2;font-weight:700;letter-spacing:0.137px;">Balance</span>
<svg class="abs" style="left:727.95px;top:823.8px" width="12" height="12" viewBox="0 0 24 24" stroke="#888ba2" stroke-width="0.7"><path fill="#888ba2" d="M11,18H13V16H11V18M12,2A10,10 0 0,0 2,12A10,10 0 0,0 12,22A10,10 0 0,0 22,12A10,10 0 0,0 12,2M12,20C7.59,20 4,16.41 4,12C4,7.59 7.59,4 12,4C16.41,4 20,7.59 20,12C20,16.41 16.41,20 12,20M12,6A4,4 0 0,0 8,10H10A2,2 0 0,1 12,8A2,2 0 0,1 14,10C14,12 11,11.75 11,15H13C13,12.75 16,12.5 16,10A4,4 0 0,0 12,6Z"/></svg>
<span id="t83" class="tx " style="left:1503.80px;top:821.50px;font-size:11.5px;line-height:17px;color:#888ba2;font-weight:700;letter-spacing:-0.112px;">0.57</span>
<span id="t84" class="tx " style="left:689.75px;top:858.10px;font-size:11.5px;line-height:17px;color:#888ba2;font-weight:700;letter-spacing:-0.161px;">Coin</span>
<svg class="abs" style="left:717.95px;top:860.4px" width="12" height="12" viewBox="0 0 24 24" stroke="#888ba2" stroke-width="0.7"><path fill="#888ba2" d="M11,18H13V16H11V18M12,2A10,10 0 0,0 2,12A10,10 0 0,0 12,22A10,10 0 0,0 22,12A10,10 0 0,0 12,2M12,20C7.59,20 4,16.41 4,12C4,7.59 7.59,4 12,4C16.41,4 20,7.59 20,12C20,16.41 16.41,20 12,20M12,6A4,4 0 0,0 8,10H10A2,2 0 0,1 12,8A2,2 0 0,1 14,10C14,12 11,11.75 11,15H13C13,12.75 16,12.5 16,10A4,4 0 0,0 12,6Z"/></svg>
<span id="t85" class="tx " style="left:1496.80px;top:858.10px;font-size:11.5px;line-height:17px;color:#888ba2;font-weight:700;letter-spacing:0.148px;">700.00</span>
<span id="t86" class="tx " style="left:689.75px;top:892.80px;font-size:11.5px;line-height:17px;color:#888ba2;font-weight:700;letter-spacing:-0.161px;">Cost</span>
<svg class="abs" style="left:717.95px;top:895.0999999999999px" width="12" height="12" viewBox="0 0 24 24" stroke="#888ba2" stroke-width="0.7"><path fill="#888ba2" d="M11,18H13V16H11V18M12,2A10,10 0 0,0 2,12A10,10 0 0,0 12,22A10,10 0 0,0 22,12A10,10 0 0,0 12,2M12,20C7.59,20 4,16.41 4,12C4,7.59 7.59,4 12,4C16.41,4 20,7.59 20,12C20,16.41 16.41,20 12,20M12,6A4,4 0 0,0 8,10H10A2,2 0 0,1 12,8A2,2 0 0,1 14,10C14,12 11,11.75 11,15H13C13,12.75 16,12.5 16,10A4,4 0 0,0 12,6Z"/></svg>
<span id="t87" class="tx " style="left:1503.60px;top:892.80px;font-size:11.5px;line-height:17px;color:#888ba2;font-weight:700;letter-spacing:0.003px;">0.00</span>
<span id="t88" class="tx " style="left:692.75px;top:928.70px;font-size:11.5px;line-height:17px;color:#888ba2;font-weight:700;letter-spacing:0.013px;">Tax</span>
<svg class="abs" style="left:714.95px;top:931.0px" width="12" height="12" viewBox="0 0 24 24" stroke="#888ba2" stroke-width="0.7"><path fill="#888ba2" d="M11,18H13V16H11V18M12,2A10,10 0 0,0 2,12A10,10 0 0,0 12,22A10,10 0 0,0 22,12A10,10 0 0,0 12,2M12,20C7.59,20 4,16.41 4,12C4,7.59 7.59,4 12,4C16.41,4 20,7.59 20,12C20,16.41 16.41,20 12,20M12,6A4,4 0 0,0 8,10H10A2,2 0 0,1 12,8A2,2 0 0,1 14,10C14,12 11,11.75 11,15H13C13,12.75 16,12.5 16,10A4,4 0 0,0 12,6Z"/></svg>
<span id="t89" class="tx " style="left:1503.80px;top:928.70px;font-size:11.5px;line-height:17px;color:#888ba2;font-weight:700;letter-spacing:-0.112px;">0.02</span>
</section>
</main>
<aside>
<div class="box" style="left:1886.5px;top:625px;width:40px;height:140px;background:#21a155;border:2px solid #ffffff;border-radius:4px"></div>
<span id="contact" class="tx" style="left:1905px;top:694.5px;font-size:17.5px;font-weight:700;color:#fff;line-height:20px;transform:translate(-50%,-50%) rotate(90deg);letter-spacing:.25px">Contact us</span>
</aside>
</body></html>
